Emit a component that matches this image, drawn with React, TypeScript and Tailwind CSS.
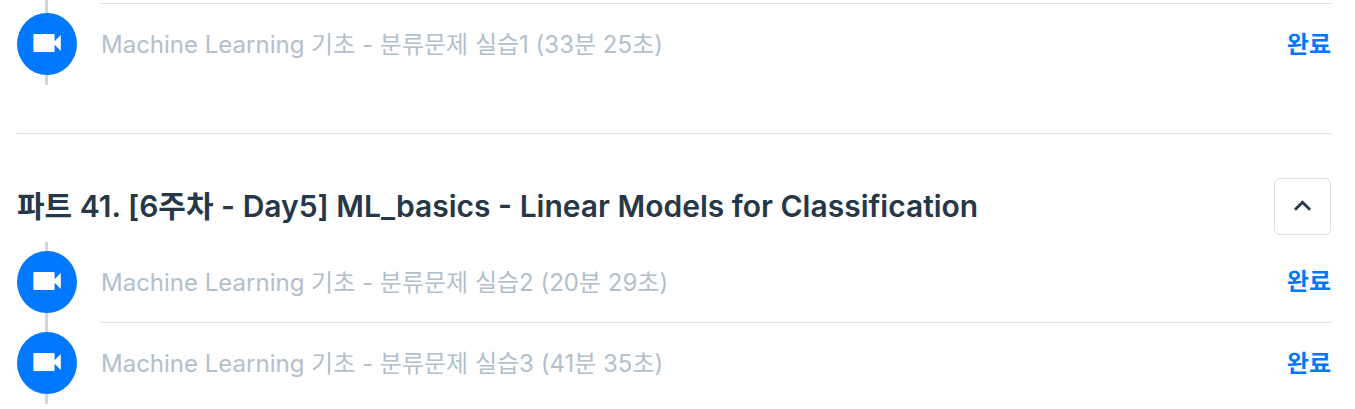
type Lesson = { title: string; duration: string; status: string };

const previousLessons: Lesson[] = [
  { title: "Machine Learning 기초 - 분류문제 실습1", duration: "33분 25초", status: "완료" },
];

const currentLessons: Lesson[] = [
  { title: "Machine Learning 기초 - 분류문제 실습2", duration: "20분 29초", status: "완료" },
  { title: "Machine Learning 기초 - 분류문제 실습3", duration: "41분 35초", status: "완료" },
];

function VideoBadge() {
  return (
    <span className="flex h-[62px] w-[60px] items-center justify-center rounded-[50%] bg-[#0078ff]">
      <svg viewBox="0 0 28 18" className="mb-0.5 h-[18px] w-7 fill-white" aria-hidden="true">
        <path d="M1.4 0H20.6Q21.6 0 21.6 1V7.2L27.8 1V17L21.6 10.8V17Q21.6 18 20.6 18H1.4Q0.4 18 0.4 17V1Q0.4 0 1.4 0Z" />
      </svg>
    </span>
  );
}

function Timeline() {
  return (
    <span className="flex w-[60px] shrink-0 flex-col items-center">
      <span className="mr-px h-[9px] w-[3px] bg-[#cdd7e0]" />
      <VideoBadge />
      <span className="mr-px h-2.5 w-[3px] bg-[#cdd7e0]" />
    </span>
  );
}

function LessonRow({ lesson, last }: { lesson: Lesson; last: boolean }) {
  return (
    <li>
      <a href="#" className="flex gap-6">
        <Timeline />
        <span
          className={
            last
              ? "flex min-w-0 flex-1 items-center justify-between gap-4"
              : "flex min-w-0 flex-1 items-center justify-between gap-4 border-b border-[#d7e2eb]"
          }
        >
          <span className="pt-px text-2xl text-[#b2c0cc]">
            {lesson.title} ({lesson.duration})
          </span>
          <span className="shrink-0 text-2xl font-bold text-[#0078ff]">{lesson.status}</span>
        </span>
      </a>
    </li>
  );
}

function LessonList({ lessons }: { lessons: Lesson[] }) {
  return (
    <ul>
      {lessons.map((lesson, i) => (
        <LessonRow key={lesson.title} lesson={lesson} last={i === lessons.length - 1} />
      ))}
    </ul>
  );
}

export default function App() {
  return (
    <main className="bg-white pr-6 pl-[17px] font-['Inter','Noto_Sans_CJK_KR',sans-serif]">
      <section className="border-b border-[#d7e2eb] pb-12">
        <div className="flex h-1 gap-6" aria-hidden="true">
          <span className="flex w-[60px] justify-center">
            <span className="mr-px w-[3px] bg-[#cdd7e0]" />
          </span>
          <span className="flex-1 border-b border-[#d7e2eb]" />
        </div>
        <LessonList lessons={previousLessons} />
      </section>
      <section className="pt-11">
        <header className="mb-[7px] flex items-center justify-between gap-4">
          <h2 className="pb-0.5 text-3xl font-semibold text-[#263747]">
            파트 41. [6주차 - Day5] ML_basics - Linear Models for Classification
          </h2>
          <button
            type="button"
            aria-label="접기"
            aria-expanded="true"
            className="flex size-[57px] shrink-0 items-center justify-center rounded-md border border-[#d7e2eb]"
          >
            <svg viewBox="0 0 17 12" className="mb-0.5 h-3 w-[17px]" aria-hidden="true">
              <path d="M1 9.8L8.5 2.3L16 9.8" fill="none" stroke="#263747" strokeWidth="2.8" />
            </svg>
          </button>
        </header>
        <LessonList lessons={currentLessons} />
      </section>
    </main>
  );
}
